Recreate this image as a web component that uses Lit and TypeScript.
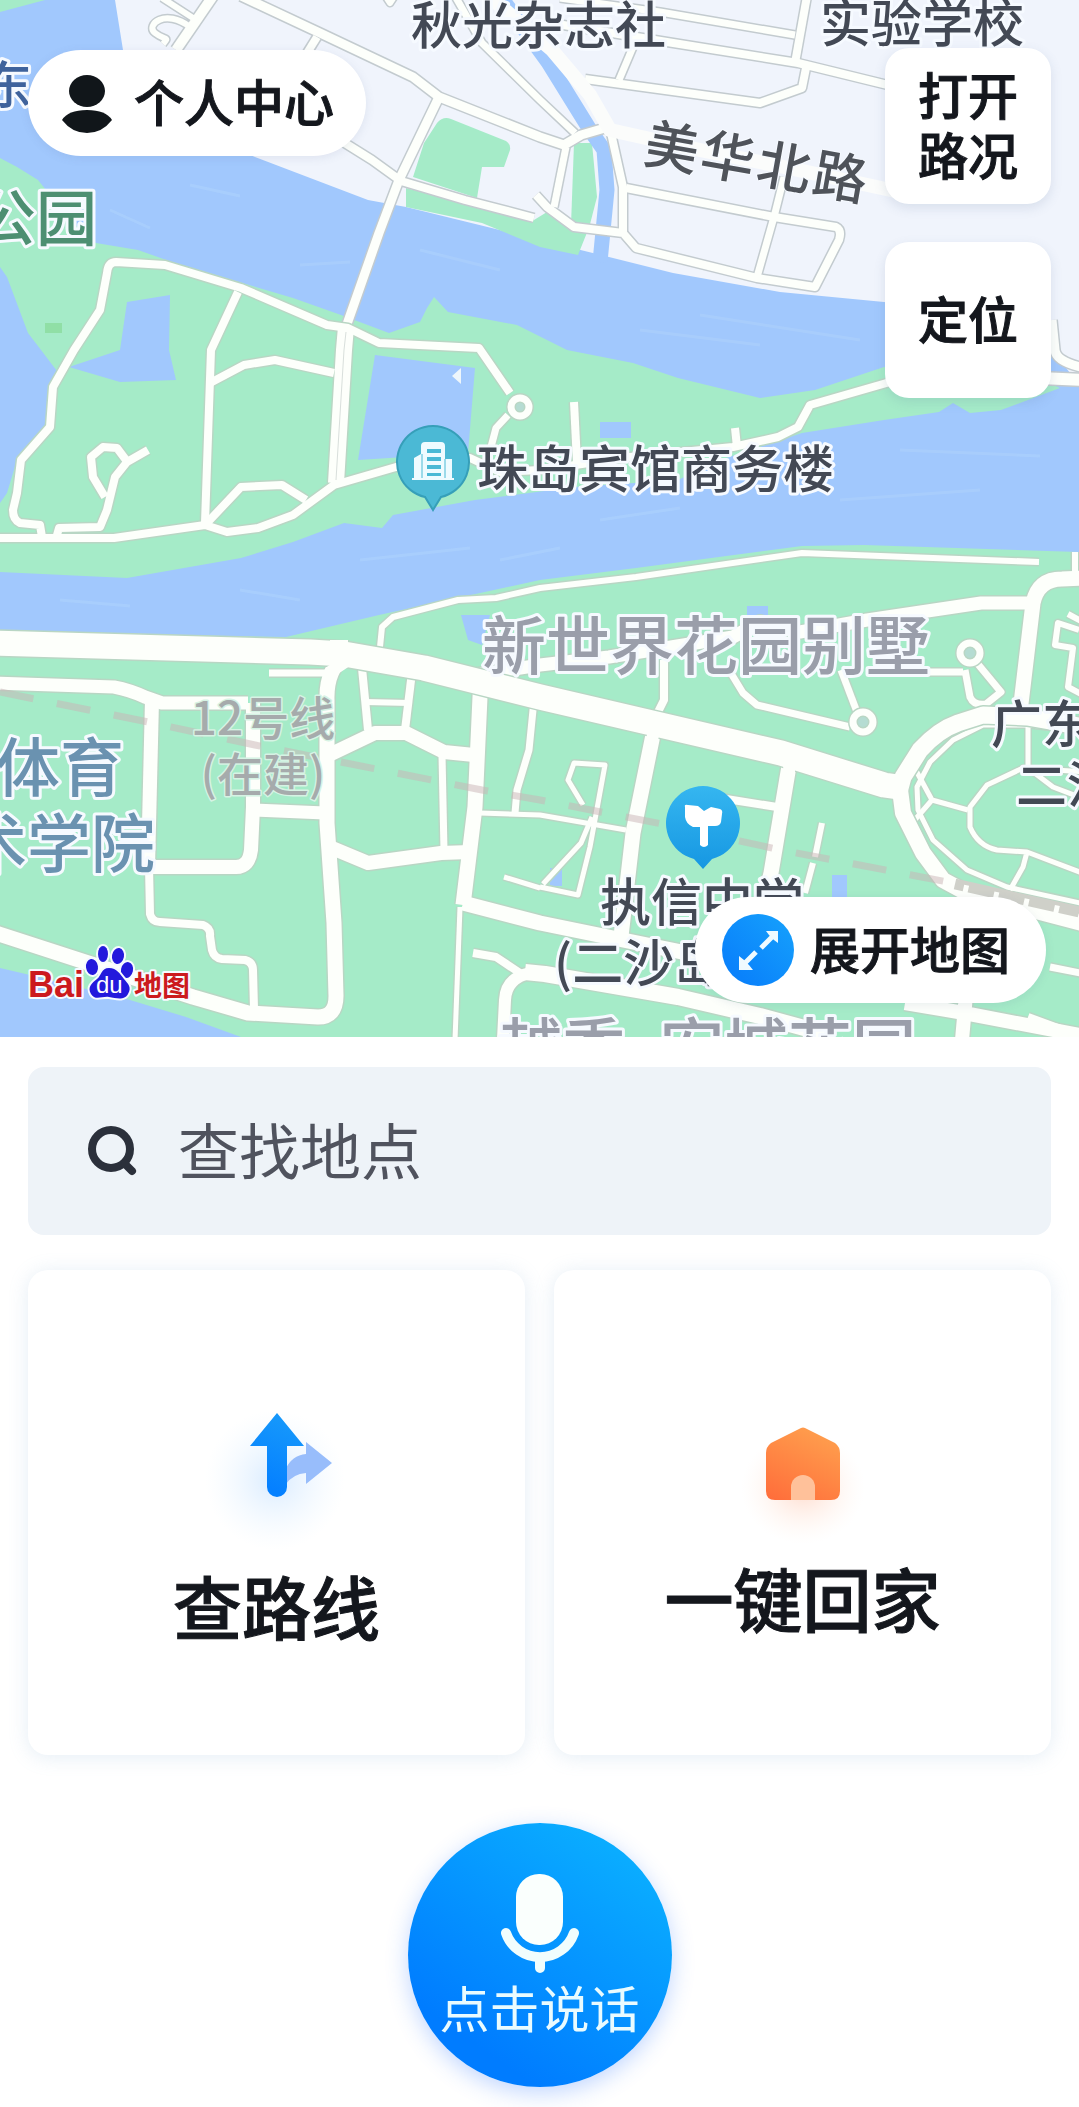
import { LitElement, html, svg, css } from "lit";
import { customElement, state } from "lit/decorators.js";

type Road = [width: number, path: string];

/* Streets on the north bank, drawn with a grey casing. */
const cityRoads: Road[] = [
  [9, "M241 -4 320 33 413 77 439 97 540 137 564 145 581 135 605 128"],
  [9, "M439 97 399 180 379 233 346 327"],
  [8, "M340 140 372 160 401 181 465 200 534 218"],
  [10, "M213 -4 176 50"],
  [8, "M317 37 304 58"],
  [6, "M162 -2 193 18M190 27C165 8 145 25 155 33S170 36 163 44"],
  [7, "M455 -4 482 43 540 100 575 133"],
  [6, "M384 -6 390 3 396 -6"],
  [7, "M560 -2 660 12 795 35"],
  [8, "M807 -4 795 63"],
  [8, "M545 22 667 42 798 63 900 88"],
  [7, "M633 47 619 80"],
  [8, "M585 79 760 103 802 88 806 68"],
  [8, "M611 133 623 187 623 233"],
  [8, "M626 188 774 217 836 227Q842 230 839 240L815 287 757 278 636 248 623 233 574 227 547 207 536 195"],
  [7, "M784 177 774 217 757 277"],
  [7, "M566 147 554 207"],
  [9, "M1052 320 1055 350Q1056 362 1085 368"],
  [12, "M1040 378 1085 380"],
];

/* Paths inside the parks and the residential blocks. */
const parkRoads: Road[] = [
  [8, "M42 537 40 525 20 523Q13 520 13 510L17 493 21 460 50 427 53 387 74 350 100 310 107 273Q108 262 116 262L165 265 241 288 327 325 348 328 379 343 479 348 510 393"],
  [7, "M508 415 496 428 491 447"],
  [8, "M238 292 211 350 205 523"],
  [8, "M210 383 244 365 275 360 334 373"],
  [16, "M346 327 344 350 336 483"],
  [8, "M-4 538 114 538 205 525 227 532 258 528 293 515 334 485 396 467 470 458 500 472 540 470 575 465 630 457 733 447 778 437 798 427 810 405 890 382"],
  [8, "M207 523 241 487 282 485 306 500"],
  [8, "M57 535 59 528 100 527 107 510 115 477 127 462 148 450"],
  [8, "M105 497 93 477 91 457 103 447 117 448 126 460"],
  [8, "M574 402 577 463"],
  [8, "M735 428 737 447"],
  [6, "M380 647 382 627 393 617 458 600 496 598 540 588 636 577 802 553 1039 562"],
  [13, "M470 676 540 665 609 657 733 637 760 622 800 632 867 620 981 603 1030 603"],
  [15, "M1020 712 1033 603Q1038 579 1062 579L1085 578"],
  [8, "M664 660 664 700 655 718"],
  [7, "M729 670 743 693 757 705 850 727"],
  [7, "M841 670 857 712"],
  [7, "M965 670 970 697Q974 706 986 704L1001 692 977 663"],
  [7, "M925 672 963 672"],
  [6, "M1079 630 1058 623 1055 645 1073 648 1068 687 1083 695M1068 614 1083 622M1075 552V572"],
  [13, "M-4 683 114 687Q130 690 145 697L162 703 248 703"],
  [7, "M269 673 325 673"],
  [14, "M152 700 148 867"],
  [8, "M149 867 150 914Q152 922 160 922L203 925Q211 928 210 936L212 950Q214 958 222 959L245 960Q253 962 253 970L254 1009"],
  [14, "M253 703 253 807 251 850Q249 867 236 867L150 867"],
  [13, "M252 810 325 813"],
  [15, "M345 655Q326 670 327 700L327 823 334 923 336 996Q336 1017 318 1017L248 1013 193 997 -4 933"],
  [14, "M329 755 375 733 406 733 444 752 474 755"],
  [8, "M362 668 368 730"],
  [8, "M412 672 405 730"],
  [6, "M365 702 410 703"],
  [7, "M442 755 444 850"],
  [14, "M332 848 368 863 441 853 470 852"],
  [15, "M481 675 475 807 463 905"],
  [5, "M460 907 455 1040"],
  [15, "M463 903 540 923 623 940 760 968"],
  [16, "M525 972 545 974 678 997 760 1016 830 1035"],
  [8, "M473 953 496 957 520 973"],
  [12, "M530 973Q506 978 505 1000L503 1040"],
  [7, "M534 700 529 750 517 790 515 813"],
  [5, "M480 813 540 815 626 830"],
  [5, "M504 877 540 888M543 884 581 843 592 817M583 805 568 780 574 763 605 765 590 847 578 895 540 887"],
  [15, "M655 725 633 833 620 945"],
  [15, "M790 760 771 873 762 910"],
  [8, "M720 798 777 807"],
  [6, "M822 823 815 857M813 863 805 893"],
  [14, "M905 1003 964 1013 1085 1036M966 995 962 1040"],
  [7, "M1050 967 1085 974"],
  [8, "M1028 1017 1085 1038"],
  [5, "M1085 731 1030 725 983 725 953 740 930 762 917 787 918 810 933 840 967 870 1007 887 1085 904"],
  [5, "M913 765 932 800 913 822M932 800 968 810"],
  [5, "M1085 772 1023 768 987 785 970 807 970 827Q978 846 997 850L1027 852 1085 874M1027 852 1023 867 1010 890"],
  [5, "M1028 722 1028 768 1053 787 1079 797"],
];

const mainRoads: Road[] = [
  [25, "M-10 643 310 652 344 654 424 668 540 697 781 753 884 785 898 787"],
  [18, "M339 640 339 656"],
  [17, "M899 792 903 777 920 750Q938 730 958 723L983 715 1027 717 1090 728"],
  [16, "M899 782 903 813 923 853 943 880 967 893 1090 925"],
];

const roundabouts = [
  [520, 407, 9], [863, 722, 10], [970, 653, 10],
];

@customElement("app-root")
export class AppRoot extends LitElement {
  @state() private query = "";

  static styles = css`
    :host {
      display: block;
      min-height: 100vh;
      background: #fff;
      color: #14171d;
      font-family: "Noto Sans CJK SC", "Noto Sans", sans-serif;
      overflow: hidden;
    }
    button, input {
      font: inherit;
      color: inherit;
      border: 0;
      margin: 0;
      padding: 0;
      background: none;
    }
    button { cursor: pointer; }
    svg { display: block; }

    .map {
      position: relative;
      aspect-ratio: 1079 / 1037;
      overflow: hidden;
    }
    .canvas { width: 100%; height: 100%; }
    .road { fill: none; stroke-linejoin: round; }
    .casing { stroke: #c3cbcf; }
    .casing-park { stroke: #b9d6c4; }
    .surface { stroke: #fdfffb; }
    .label {
      font-size: 51px;
      font-weight: 500;
      fill: #434955;
      stroke: #f6faff;
      stroke-width: 6px;
      stroke-linejoin: round;
      paint-order: stroke;
    }
    .street { font-size: 54px; fill: #4f535a; stroke-width: 2px; }
    .district { font-size: 64px; fill: #9a9eaa; }
    .school { font-size: 64px; fill: #6a92b0; }
    .park { font-size: 61px; fill: #4d8f72; }
    .water-name { fill: #3f639c; }
    .metro { font-size: 46px; fill: #a6abac; stroke: #d6f3e4; stroke-width: 3px; text-anchor: middle; }
    .brand {
      font-size: 36px;
      font-weight: 700;
      fill: #cc1a1e;
      stroke-width: 4px;
    }
    .latin { font-family: "Liberation Sans", sans-serif; }
    .brand-cn { font-size: 28px; }
    .brand-du { font-size: 24px; font-weight: 400; fill: #fff; stroke: none; }

    .pill, .tool, .title { -webkit-text-stroke: 1px currentColor; }
    .pill {
      position: absolute;
      display: flex;
      align-items: center;
      height: 106px;
      border-radius: 53px;
      background: #fff;
      font-size: 50px;
      font-weight: 500;
      line-height: 60px;
      box-shadow: 0 2px 10px rgba(90, 110, 150, 0.12);
    }
    .pill span { padding-bottom: 6px; }
    .profile { top: 50px; left: 28px; padding: 0 32px; gap: 20px; }
    .expand { right: 33px; bottom: 34px; padding: 0 36px 0 27px; gap: 16px; }
    .tools {
      position: absolute;
      top: 48px;
      right: 28px;
      display: flex;
      flex-direction: column;
      gap: 38px;
    }
    .tool {
      width: 166px;
      height: 156px;
      border-radius: 24px;
      background: #fff;
      font-size: 50px;
      font-weight: 500;
      line-height: 60px;
      padding: 0 30px 6px;
      box-shadow: 0 4px 12px rgba(90, 110, 150, 0.16);
    }

    .panel {
      display: flex;
      flex-direction: column;
      gap: 35px;
      padding: 30px 28px 20px;
    }
    .search {
      display: flex;
      align-items: center;
      gap: 38px;
      height: 168px;
      padding: 0 56px;
      border-radius: 16px;
      background: #eef3f8;
      box-sizing: border-box;
    }
    .search svg { flex: none; }
    .field {
      flex: 1;
      min-width: 0;
      height: 90px;
      padding-bottom: 6px;
      font-size: 61px;
      outline: none;
      color: #50535e;
    }
    .field::placeholder { color: #50535e; opacity: 1; }

    .cards {
      display: grid;
      grid-template-columns: 1fr 1fr;
      gap: 29px;
    }
    .card {
      display: flex;
      flex-direction: column;
      align-items: center;
      height: 485px;
      padding-top: 130px;
      border-radius: 20px;
      background: #fff;
      box-shadow: 0 2px 20px rgba(120, 165, 205, 0.2);
      box-sizing: border-box;
    }
    .title { font-size: 69px; font-weight: 500; line-height: 74px; }

    .talk {
      align-self: center;
      display: flex;
      flex-direction: column;
      align-items: center;
      width: 264px;
      height: 264px;
      margin-top: 33px;
      padding-top: 47px;
      border-radius: 50%;
      background: linear-gradient(35deg, #007cff 20%, #0aacff 85%);
      color: #e9fbff;
      font-size: 50px;
      font-weight: 400;
      line-height: 52px;
      box-shadow: 0 6px 22px rgba(50, 120, 255, 0.3);
      box-sizing: border-box;
    }
  `;

  private roads(list: Road[], casing: string) {
    return svg`
      ${list.map(([w, d]) => svg`<path class="road ${casing}" stroke-width=${w + 3} d=${d} />`)}
      ${list.map(([w, d]) => svg`<path class="road surface" stroke-width=${w} d=${d} />`)}
    `;
  }

  private renderMap() {
    return html`
      <svg class="canvas" viewBox="0 0 1079 1037" preserveAspectRatio="xMidYMid slice" role="img" aria-label="地图">
        <defs>
          <linearGradient id="pin" x1="0" y1="0" x2="0" y2="1">
            <stop offset="0" stop-color="#35b6f0" />
            <stop offset="1" stop-color="#1697e2" />
          </linearGradient>
        </defs>
        <rect width="1079" height="1037" fill="#a1c8fd" />

        <g fill="#f0f4fc">
          <path d="M115 0 123 50 140 110 255 157 368 200 406 207 540 240 609 257 673 273 780 292 884 302 1030 320 1079 385V0Z" />
        </g>
        <g fill="#a5ebc8">
          <path d="M0 0H45L0 12Z" />
          <path d="M406 188 465 203 534 220 547 212 588 230 578 255 540 247 482 223 406 207Z" />
          <path d="M574 143H592L597 197 588 232 571 225Z" />
          <path d="M451 119 506 141Q511 144 510 150L504 167H482L477 198 413 177 424 143 437 123Q443 116 451 119Z" />
          <path d="M0 158 17 167 38 180 70 220 96 243 138 250 172 262 293 298 341 315 389 333 420 322 427 308 434 297 448 312 517 325 567 350 633 363 678 378 760 398 815 390 884 367 1000 360 1060 388 1001 410 970 413 953 403 939 412 884 420 802 433 720 460 678 480 575 487 475 500 393 515 382 528 344 523 293 542 241 558 127 578 0 572V503L7 493 17 460 45 430 60 375 41 350 28 333 7 277 0 267Z" />
          <path d="M0 632 286 637 379 615 540 580 636 568 802 546 864 545 1079 552V1037H0Z" />
        </g>
        <g fill="#a1c8fd">
          <path d="M127 302 170 295 169 350 176 380 120 382 69 367 120 350Z" />
          <path d="M375 355 475 368 468 453 358 460Z" />
          <path d="M600 422H631V438H600Z" />
          <path d="M461 615H490L482 645 468 640Z" />
          <path d="M747 606H768V618H747Z" />
          <path d="M832 875H847V900H832ZM550 868H562V886H550Z" />
          <path d="M0 968 30 975 130 1000 186 1017 241 1037H0Z" />
        </g>
        <g fill="none" stroke="#b2d4fc" stroke-width="3" opacity=".45">
          <path d="M110 210 150 228M190 185 240 196M300 265 350 262M420 250 500 270M640 330 760 345M700 315 860 340" />
          <path d="M60 600 130 606M240 590 300 600M360 560 470 548M600 520 680 508M840 500 980 490M900 450 1040 456M500 560 560 548" />
        </g>
        <path d="M45 323H62V333H45Z" fill="#90dfa6" />
        <path d="M452 376 461 368V384Z" fill="#eef6fb" />
        <path d="M500 -4 548 62 590 130 604 150 607 190 600 262" fill="none" stroke="#a1c8fd" stroke-width="15" />

        ${this.roads(cityRoads, "casing")}
        <path class="road" stroke="#fbfcfb" stroke-width="14" d="M486 -6 552 50 590 95 610 130 700 150 784 167 900 192" />
        ${this.roads(parkRoads, "casing-park")}
        ${this.roads(mainRoads, "casing-park")}
        <path class="road surface" stroke-width="12" d="M345 662 330 672M481 675 480 690M655 725 652 740M790 750 789 772M1021 700 1020 718" />
        <path class="road" stroke="#d9dfdc" stroke-width="1" d="M346 332 344 350 336 480" />
        ${roundabouts.map(([x, y, r]) => svg`
          <circle cx=${x} cy=${y} r=${r} fill="#b5dcd2" stroke="#b9d6c4" stroke-width="10" />
          <circle cx=${x} cy=${y} r=${r} fill="none" stroke="#fdfffb" stroke-width="7" />`)}

        <path class="road" stroke="#c9b3b6" stroke-width="7" opacity=".5" stroke-dasharray="34 24"
          d="M0 692 148 722 255 745 482 790 540 800 667 825 781 850 953 883" />
        <path class="road" stroke="#cfd0c9" stroke-width="11" d="M955 884 1079 912" />
        <path class="road" stroke="#fdfffb" stroke-width="11" stroke-dasharray="5 26" d="M963 890 1079 916" />

        <text class="label" x="411" y="44">秋光杂志社</text>
        <text class="label" x="820" y="42">实验学校</text>
        <text class="label water-name" x="-19" y="104">东</text>
        <text class="label park" x="-25" y="241">公园</text>
        <text class="label street" x="-27 30 87 144" y="20" transform="translate(672 147) rotate(10)">美华北路</text>
        <text class="label district" x="482" y="669">新世界花园别墅</text>
        <text class="label metro" x="263" y="735">12号线</text>
        <text class="label metro" x="263" y="791">(在建)</text>
        <text class="label school" x="-4" y="791">体育</text>
        <text class="label school" x="-37" y="867">术学院</text>
        <text class="label" x="600" y="921">执信中学</text>
        <text class="label" x="554" y="982">(二沙岛)</text>
        <text class="label" x="991" y="743">广东</text>
        <text class="label" x="1016" y="804">二沙</text>
        <text class="label district" x="498" y="1071">越秀</text>
        <text class="label district" x="660" y="1071">宏城花园</text>

        <path d="M433 510 425 497A36 36 0 1 1 441 497Z" fill="#4bb9d5" stroke="#369fb9" stroke-width="2" />
        <path d="M412 480V478H414V458L421 454V446Q421 442 425 442H441Q445 442 445 446V459H452V478H454V480Z" fill="#effbff" />
        <path d="M427 449H441V453H427ZM427 457H441V461H427ZM427 465H441V469H427ZM427 473H441V476H427Z" fill="#4bb9d5" />
        <path d="M422 454V478M445 459V478" stroke="#4bb9d5" stroke-width="1" />
        <text class="label" x="477" y="488">珠岛宾馆商务楼</text>

        <path d="M703 869 694 859A37 37 0 1 1 712 859Z" fill="url(#pin)" />
        <path d="M685 807Q684 804 688 805L698 806 704 811 711 807 720 809Q723 810 722 814L721 822Q720 826 715 826H708V845Q704 849 700 845V827H693Q686 824 685 817Z" fill="#fff" />

        <text class="label brand latin" x="28" y="997">Bai</text>
        <text class="label brand brand-cn" x="134" y="996">地图</text>
        <g fill="#2319dc" stroke="#f6faff" stroke-width="4" paint-order="stroke">
          <ellipse cx="103" cy="954" rx="5" ry="8" />
          <ellipse cx="118" cy="956" rx="6" ry="8" transform="rotate(10 118 956)" />
          <ellipse cx="92" cy="967" rx="6" ry="8" transform="rotate(-8 92 967)" />
          <ellipse cx="127" cy="970" rx="6" ry="8" transform="rotate(12 127 970)" />
          <path d="M109 968C117 968 120 974 124 979S132 987 128 994 116 998 109 997 95 1001 91 994 92 983 97 979 101 968 109 968Z" />
        </g>
        <text class="label brand-du latin" x="96" y="993">du</text>
      </svg>
    `;
  }

  render() {
    return html`
      <section class="map">
        ${this.renderMap()}
        <button class="pill profile">
          <svg width="54" height="64" viewBox="0 0 54 64" fill="#11161a" aria-hidden="true">
            <ellipse cx="27" cy="20" rx="18" ry="16" />
            <path d="M2 49Q8 39 27 39T52 49Q42 62 27 62T2 49Z" />
          </svg>
          <span>个人中心</span>
        </button>
        <div class="tools">
          <button class="tool">打开路况</button>
          <button class="tool">定位</button>
        </div>
        <button class="pill expand">
          <svg width="72" height="72" viewBox="0 0 72 72" aria-hidden="true">
            <defs>
              <linearGradient id="disc" x1="0" y1="1" x2="1" y2="0">
                <stop offset=".2" stop-color="#0a82fb" />
                <stop offset="1" stop-color="#16a2fc" />
              </linearGradient>
            </defs>
            <circle cx="36" cy="36" r="36" fill="url(#disc)" />
            <path d="M39 34 50 23M34 38 22 50" fill="none" stroke="#effaff" stroke-width="5" />
            <path d="M44 17H56V29L52 26 47 21ZM17 42V56H31L27 51 22 46Z" fill="#effaff" />
          </svg>
          <span>展开地图</span>
        </button>
      </section>

      <main class="panel">
        <label class="search">
          <svg width="56" height="56" viewBox="0 0 56 56" fill="none" stroke="#2b303b" aria-hidden="true">
            <circle cx="27" cy="26" r="19" stroke-width="8" />
            <path d="M41 41 48 48" stroke-width="8" stroke-linecap="round" />
          </svg>
          <input class="field" type="text" placeholder="查找地点" aria-label="查找地点"
            .value=${this.query}
            @input=${(e: Event) => (this.query = (e.target as HTMLInputElement).value)} />
        </label>

        <div class="cards">
          <button class="card">
            <svg width="160" height="168" viewBox="0 0 160 168" aria-hidden="true">
              <defs>
                <radialGradient id="glow-blue">
                  <stop offset="0" stop-color="#8fc4ff" stop-opacity=".34" />
                  <stop offset="1" stop-color="#cfeaff" stop-opacity="0" />
                </radialGradient>
                <linearGradient id="up" x1="0" y1="1" x2=".3" y2="0">
                  <stop offset=".2" stop-color="#0580ff" />
                  <stop offset="1" stop-color="#1597fb" />
                </linearGradient>
              </defs>
              <ellipse cx="78" cy="80" rx="70" ry="70" fill="url(#glow-blue)" />
              <path d="M88 70Q95 55 109 54V42L135 63 109 84V73Q96 74 89 84Z" fill="#98bdfb" />
              <path d="M80 13 107 46H90V87A10 10 0 0 1 70 87V46H53Z" fill="url(#up)" />
            </svg>
            <span class="title">查路线</span>
          </button>
          <button class="card">
            <svg width="160" height="160" viewBox="0 0 160 160" aria-hidden="true">
              <defs>
                <radialGradient id="glow-orange">
                  <stop offset="0" stop-color="#ff9a70" stop-opacity=".36" />
                  <stop offset="1" stop-color="#ffe3d2" stop-opacity="0" />
                </radialGradient>
                <linearGradient id="home" x1="0" y1="1" x2=".5" y2="0">
                  <stop offset="0" stop-color="#ff6c3a" />
                  <stop offset="1" stop-color="#ff9b4c" />
                </linearGradient>
              </defs>
              <ellipse cx="80" cy="88" rx="62" ry="56" fill="url(#glow-orange)" />
              <path d="M76 29Q80 26 84 29L112 43Q117 47 117 53V91Q117 100 108 100H52Q43 100 43 91V53Q43 47 48 43Z" fill="url(#home)" />
              <path d="M68 100V87A12 12 0 0 1 92 87V100Z" fill="#ffc19a" />
            </svg>
            <span class="title">一键回家</span>
          </button>
        </div>

        <button class="talk">
          <svg width="90" height="110" viewBox="0 0 90 110" aria-hidden="true">
            <rect x="21" y="4" width="47" height="71" rx="23" fill="#fafffd" />
            <path d="M11 63A36 36 0 0 0 79 63M45 88V98" fill="none" stroke="#f0fdfd" stroke-width="10" stroke-linecap="round" />
          </svg>
          <span>点击说话</span>
        </button>
      </main>
    `;
  }
}
